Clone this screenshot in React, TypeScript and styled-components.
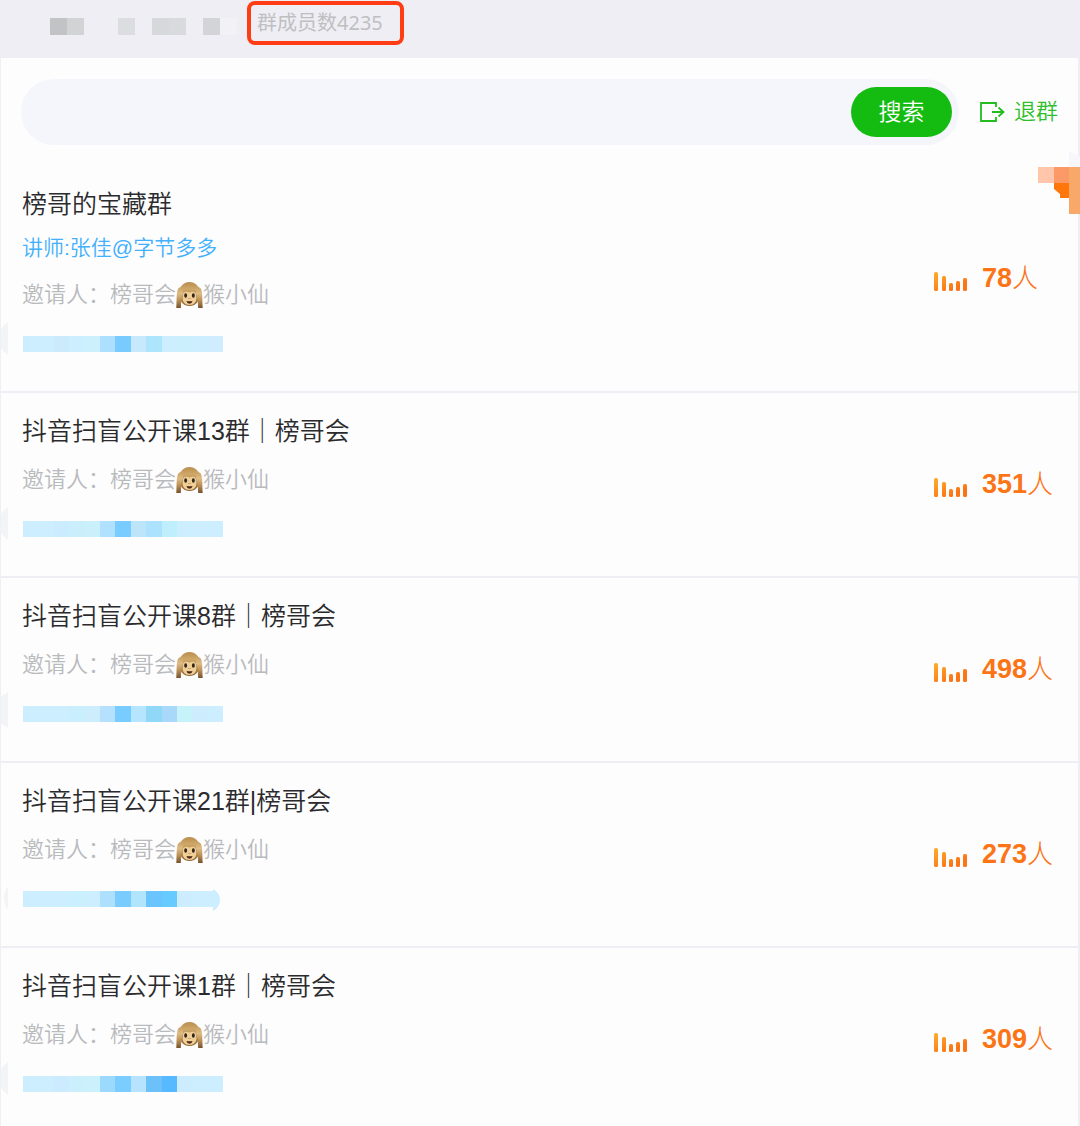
import React from 'react';
import styled, { createGlobalStyle } from 'styled-components';

const GlobalStyle = createGlobalStyle`
  *, *::before, *::after { box-sizing: border-box; }
  body {
    margin: 0;
    background: #fdfdfe;
    font-family: "Liberation Sans", "Noto Sans CJK SC", sans-serif;
    font-weight: 350;
  }
  h2, p, ul { margin: 0; padding: 0; }
`;

const Page = styled.div`
  position: relative;
  height: 100vh;
  display: flex;
  flex-direction: column;
`;

const Header = styled.header`
  display: flex;
  align-items: flex-start;
  flex: none;
  height: 58px;
  padding: 1px 50px;
  background: #efeef5;
`;

const NameMosaic = styled.div`
  display: flex;
  margin: 17px 10px 0 0;
`;

const NameCell = styled.span<{ $color: string }>`
  width: 17px;
  height: 17px;
  background: ${(p) => p.$color};
`;

const MemberBadge = styled.div`
  width: 157px;
  height: 44px;
  padding-left: 6px;
  border: 4px solid #ff3d14;
  border-radius: 8px;
  color: #bfbfc1;
  font-family: "Noto Sans", "Noto Sans CJK SC", sans-serif;
  font-size: 20px;
  font-weight: 400;
  line-height: 36px;
  white-space: nowrap;
`;

const Panel = styled.main`
  flex: 1;
  overflow-x: hidden;
  overflow-y: auto;
  scrollbar-width: none;
  border-left: 1px solid #f0f0f4;
  border-right: 2px solid #eeeff4;
`;

const Toolbar = styled.div`
  display: flex;
  align-items: center;
  gap: 21px;
  padding: 21px 20px;
`;

const SearchForm = styled.form`
  display: flex;
  align-items: center;
  flex: 1;
  height: 66px;
  padding: 0 7px 0 28px;
  border-radius: 33px;
  background: #f4f6fb;
`;

const SearchInput = styled.input`
  flex: 1;
  min-width: 0;
  height: 50px;
  border: 0;
  outline: 0;
  background: transparent;
  color: #2b2b2d;
  font: inherit;
  font-size: 22px;
`;

const SearchButton = styled.button`
  width: 101px;
  height: 50px;
  padding: 0;
  border: 0;
  border-radius: 25px;
  background: #14bc11;
  color: #fff;
  font: inherit;
  font-size: 23px;
  line-height: 50px;
`;

const LeaveButton = styled.button`
  display: flex;
  align-items: center;
  gap: 9px;
  padding: 0;
  border: 0;
  background: none;
  color: #2fbf2c;
  font: inherit;
  font-size: 22px;
  line-height: 32px;
`;

const List = styled.ul`
  list-style: none;
`;

const Row = styled.li`
  display: flex;
  align-items: center;
  border-bottom: 2px solid #eeeff4;
`;

const Info = styled.div`
  flex: 1;
  padding: 21px 0 39px 21px;
`;

const Title = styled.h2`
  color: #2b2b2d;
  font-size: 25px;
  font-weight: 350;
  line-height: 34px;
`;

const Lecturer = styled.p`
  margin-top: 12px;
  color: #42b0fc;
  font-size: 21px;
  line-height: 30px;
`;

const Inviter = styled.p`
  display: flex;
  align-items: center;
  margin-top: 17px;
  color: #b9babc;
  font-size: 22px;
  line-height: 30px;
`;

const TagMosaic = styled.div`
  position: relative;
  display: flex;
  width: 200px;
  height: 16px;
  margin: 26px 0 0 1px;
`;

const TagCell = styled.span<{ $color: string }>`
  flex: 1;
  background: ${(p) => p.$color};
`;

const EdgeMark = styled.svg`
  position: absolute;
  left: -23px;
  top: -14px;
`;

const TailMark = styled.svg`
  position: absolute;
  right: 0;
  top: -2px;
`;

const Count = styled.div`
  display: flex;
  align-items: center;
  gap: 14px;
  width: 144px;
  padding-top: 5px;
  color: #fb7415;
  font-size: 26px;
  font-weight: 300;
  line-height: 36px;
`;

const CountText = styled.span`
  padding-bottom: 6px;
`;

const CountNumber = styled.strong`
  font-size: 27px;
  font-weight: 700;
`;

const CornerMark = styled.svg`
  position: absolute;
  top: 152px;
  right: 0;
`;

const Monkey = () => (
  <svg width="27" height="28" viewBox="0 0 28 28" role="img" aria-label="🙉">
    <defs>
      <linearGradient id="arm" x1="0" y1="0" x2="0" y2="1">
        <stop offset="0" stopColor="#c9a164" />
        <stop offset="0.3" stopColor="#dfbc85" />
        <stop offset="0.65" stopColor="#b88d54" />
        <stop offset="1" stopColor="#75502b" />
      </linearGradient>
      <linearGradient id="fur" x1="0" y1="0" x2="0" y2="1">
        <stop offset="0" stopColor="#b98d4e" />
        <stop offset="0.3" stopColor="#cfa868" />
        <stop offset="1" stopColor="#8f6634" />
      </linearGradient>
    </defs>
    <path d="M14 0.500C20 0.500 24.500 5 25 12C25 21 20 25.500 14 25.500S3 21 3 12C3.500 5 8 0.500 14 0.500Z" fill="url(#fur)" />
    <path d="M7 15C7 10.500 10 10 14 11.300C18 10 21 10.500 21 15C22 21.500 18.500 24.300 14 24.300S6 21.500 7 15Z" fill="#f0cf96" />
    <path d="M0.300 27.500C0.800 20 0.300 12 2 8C3.500 5 7.500 5.500 7.500 9C7.500 13 6 15 5.500 19L5 27.500Z" fill="url(#arm)" />
    <path d="M27.700 27.500C27.200 20 27.700 12 26 8C24.500 5 20.500 5.500 20.500 9C20.500 13 22 15 22.500 19L23 27.500Z" fill="url(#arm)" />
    <ellipse cx="10" cy="14.500" rx="1.500" ry="2.400" fill="#30241d" />
    <ellipse cx="18" cy="14.500" rx="1.500" ry="2.400" fill="#30241d" />
    <path d="M13 17.300L13.500 18M15 17.300L14.500 18" stroke="#7c5931" strokeWidth="0.800" />
    <path d="M10.800 20.200Q14 21 17.200 20.200Q16.500 23 14 23T10.800 20.200Z" fill="#4b2417" />
  </svg>
);

const LeaveIcon = () => (
  <svg width="25" height="20" viewBox="0 0 25 20" fill="none" stroke="#23bd20" strokeWidth="1.800" aria-hidden="true">
    <path d="M16 5V1H1V19H16V15" />
    <path d="M12 10H23.500M18.500 5.500L23.500 10L18.500 14.500" />
  </svg>
);

const BAR_TOPS = [
  [0, 5],
  [8, 9],
  [15, 16],
  [22, 14],
  [29, 11],
];

const BarsIcon = () => (
  <svg width="34" height="28" viewBox="0 0 34 28" aria-hidden="true">
    <defs>
      <linearGradient id="bars" gradientUnits="userSpaceOnUse" x1="0" y1="4" x2="10" y2="26">
        <stop offset="0" stopColor="#ffb02e" />
        <stop offset="1" stopColor="#fb7415" />
      </linearGradient>
    </defs>
    {BAR_TOPS.map(([x, y]) => (
      <rect key={x} x={x} y={y} width="4" height={24 - y} rx="1.500" fill="url(#bars)" />
    ))}
  </svg>
);

const BASE = '#cdeeff';

interface Group {
  title: string;
  lecturer?: string;
  count: number;
  cells: string[];
  edge: string;
  tail?: boolean;
}

const EDGE_ROUND = 'M8 0V33Q3 30 0 24V9Q3 3 8 0Z';
const EDGE_CUT = 'M8 0V36L0 31V5Z';
const EDGE_THIN = 'M8 10Q4 14 4 21T8 33Z';

const GROUPS: Group[] = [
  {
    title: '榜哥的宝藏群',
    lecturer: '讲师:张佳@字节多多',
    count: 78,
    cells: [BASE, BASE, '#cbebfd', BASE, '#ccf0fc', '#ade0ff', '#78caff', '#c6e9fe', '#ace5fc', BASE, '#cbeffd', BASE, '#d0edff'],
    edge: EDGE_ROUND,
  },
  {
    title: '抖音扫盲公开课13群｜榜哥会',
    count: 351,
    cells: [BASE, BASE, '#cbecfe', '#cbeefd', '#caf0fc', '#b0e1ff', '#79ccff', '#bce5fa', '#ade2ff', '#bfeffd', BASE, BASE, BASE],
    edge: EDGE_ROUND,
  },
  {
    title: '抖音扫盲公开课8群｜榜哥会',
    count: 498,
    cells: [BASE, BASE, BASE, '#c8effb', '#ceedfc', '#b5e1fe', '#79ccff', '#b5e5ff', '#91d7f8', '#a9d9fa', '#c6f2fa', '#cdecfe', BASE],
    edge: EDGE_CUT,
  },
  {
    title: '抖音扫盲公开课21群|榜哥会',
    count: 273,
    cells: [BASE, BASE, BASE, '#caeffd', BASE, '#ade0fd', '#7accff', '#b0e5fc', '#6ac4fe', '#68cbff', '#cdecfe', BASE, BASE],
    edge: EDGE_THIN,
    tail: true,
  },
  {
    title: '抖音扫盲公开课1群｜榜哥会',
    count: 309,
    cells: [BASE, BASE, '#ccebfe', '#cbeffc', '#cbf1fc', '#9bdafd', '#79cdff', '#b7e3fe', '#6bc1f8', '#57b9ff', '#cdecfe', BASE, BASE],
    edge: EDGE_ROUND,
  },
];

const NAME_CELLS = [
  '#c2c3c4', '#d2d3d5', 'transparent', 'transparent', '#dcdde1', 'transparent',
  '#d7d8db', '#d9dadd', 'transparent', '#d3d4d8', '#f1f1f6',
];

const GroupRow = ({ group }: { group: Group }) => (
  <Row>
    <Info>
      <Title>{group.title}</Title>
      {group.lecturer && <Lecturer>{group.lecturer}</Lecturer>}
      <Inviter>
        <span>邀请人：榜哥会</span>
        <Monkey />
        <span>猴小仙</span>
      </Inviter>
      <TagMosaic>
        <EdgeMark width="8" height="36" viewBox="0 0 8 36" aria-hidden="true">
          <path d={group.edge} fill="#f3f4f6" />
        </EdgeMark>
        {group.cells.map((color, i) => (
          <TagCell key={i} $color={color} />
        ))}
        {group.tail && (
          <TailMark width="10" height="22" viewBox="0 0 10 22" aria-hidden="true">
            <path d="M0 0H10V22H0Z" fill="#fdfdfe" />
            <path d="M0 0Q7 4 7 11T0 22Z" fill={BASE} />
          </TailMark>
        )}
      </TagMosaic>
    </Info>
    <Count>
      <BarsIcon />
      <CountText>
        <CountNumber>{group.count}</CountNumber>人
      </CountText>
    </Count>
  </Row>
);

export default function App() {
  return (
    <Page>
      <GlobalStyle />
      <Header>
        <NameMosaic aria-hidden="true">
          {NAME_CELLS.map((color, i) => (
            <NameCell key={i} $color={color} />
          ))}
        </NameMosaic>
        <MemberBadge>群成员数4235</MemberBadge>
      </Header>
      <Panel>
        <Toolbar>
          <SearchForm role="search" onSubmit={(e) => e.preventDefault()}>
            <SearchInput type="text" aria-label="搜索" />
            <SearchButton type="submit">搜索</SearchButton>
          </SearchForm>
          <LeaveButton type="button">
            <LeaveIcon />
            退群
          </LeaveButton>
        </Toolbar>
        <List>
          {GROUPS.map((group) => (
            <GroupRow key={group.title} group={group} />
          ))}
        </List>
      </Panel>
      <CornerMark width="55" height="62" viewBox="0 0 55 62" aria-hidden="true">
        <path d="M44 0Q50 1 55 5V15H44Z" fill="#f7f7fb" />
        <path d="M0 15H13V31H5Q0 24 0 15Z" fill="#fffdfa" />
        <path d="M13 15H29V31H13Z" fill="#ffc6ab" />
        <path d="M29 15H44V31H29Z" fill="#fb9967" />
        <path d="M29 31H44V46H35V42L29 37Z" fill="#ff760a" />
        <path d="M44 15H55V62H44Z" fill="#f8a868" />
      </CornerMark>
    </Page>
  );
}
